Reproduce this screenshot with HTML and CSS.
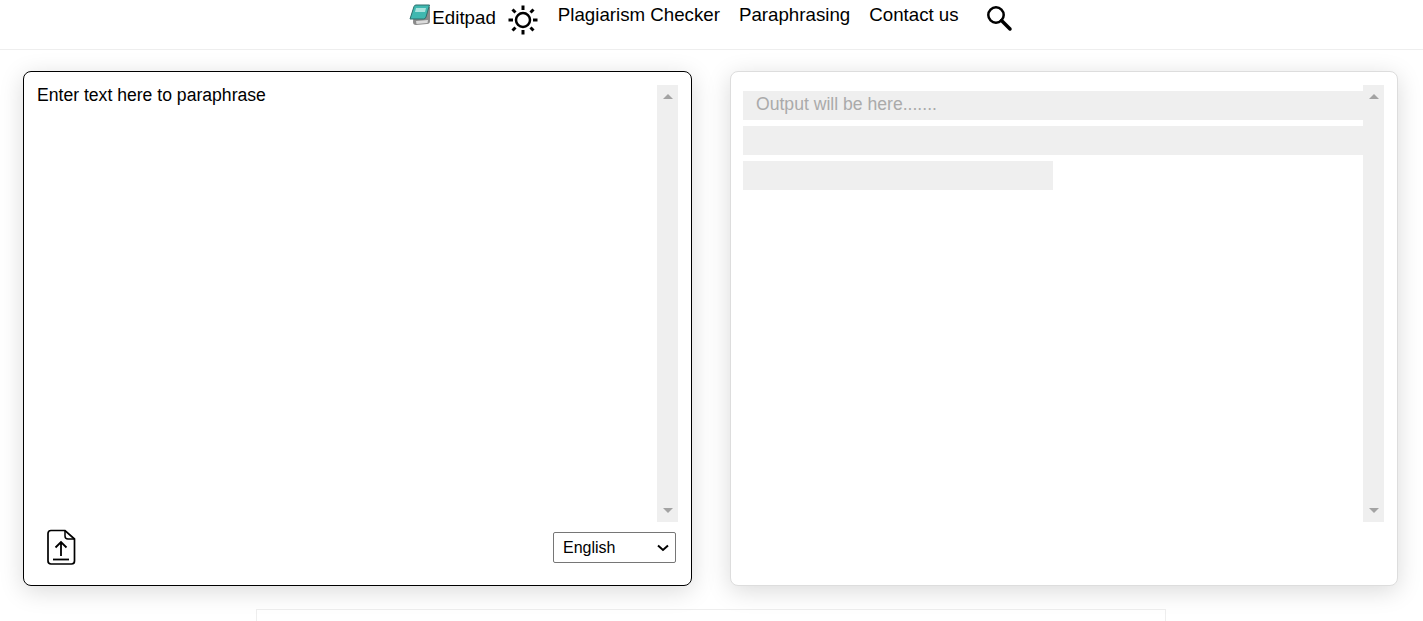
FILE: index.html
```html
<!DOCTYPE html>
<html lang="en">

<head>
    <meta charset="UTF-8">
    <meta name="viewport" content="width=device-width, initial-scale=1.0">
    <title>Editpad Paraphrasing</title>
    <link rel="stylesheet" href="styles.css">
</head>

<body>

    <header class="site-header">
        <a class="brand" href="#">
            <svg class="brand-icon" width="22" height="22" viewBox="0 0 22 22">
                <path d="M5 4 L21 3 L21 17 Q21 20 18 20 L7 21 Q4 21 4 18 Z" fill="#8a8a8a" />
                <path d="M7 17 L19 16 L18.500 19 L7.500 20 Z" fill="#dcdcdc" />
                <path d="M5 2.500 Q5.500 1 7 1 L20.500 1 L17 13 Q16.500 15 14.500 15 L1 15 Z" fill="#3fb8b0"
                    stroke="#2c6f6c" stroke-width="1" />
                <path d="M7 4 L17 4 L16 8 L6 8 Z" fill="#a9e3de" />
            </svg>
            <span>Editpad</span>
        </a>
        <button class="theme-btn" type="button" aria-label="Theme">
            <svg width="32" height="32" viewBox="0 0 32 32">
                <circle cx="16" cy="16" r="7" fill="none" stroke="#000" stroke-width="2.500" />
                <g stroke="#000" stroke-width="3">
                    <path d="M16 1.500 V6" />
                    <path d="M16 26 V30.500" />
                    <path d="M1.500 16 H6" />
                    <path d="M26 16 H30.500" />
                    <path d="M5.500 5.500 L8.500 8.500" />
                    <path d="M23.500 23.500 L26.500 26.500" />
                    <path d="M5.500 26.500 L8.500 23.500" />
                    <path d="M23.500 8.500 L26.500 5.500" />
                </g>
            </svg>
        </button>
        <nav class="main-nav">
            <a href="#">Plagiarism Checker</a>
            <a href="#">Paraphrasing</a>
            <a href="#">Contact us</a>
        </nav>
        <button class="search-btn" type="button" aria-label="Search">
            <svg width="28" height="28" viewBox="0 0 28 28">
                <circle cx="11" cy="11" r="7.700" fill="none" stroke="#000" stroke-width="2.500" />
                <path d="M16.500 16.500 L25 25" stroke="#000" stroke-width="3.500" stroke-linecap="round" />
            </svg>
        </button>
    </header>

    <main class="tool">
        <section class="card card-input">
            <div class="card-body">
                <div class="input-text">Enter text here to paraphrase</div>
                <div class="scroll-track">
                    <span class="arrow-up"></span>
                    <span class="arrow-down"></span>
                </div>
            </div>
            <div class="card-foot">
                <button class="upload-btn" type="button" aria-label="Upload file">
                    <svg width="32" height="38" viewBox="0 0 32 38" fill="none" stroke="#000">
                        <path d="M6 2.500 H20 L29.500 11 V33 Q29.500 36 26.500 36 H6 Q3 36 3 33 V5.500 Q3 2.500 6 2.500 Z"
                            stroke-width="1.700" />
                        <path d="M20 2.500 V8 Q20 11 23 11 H29.500" stroke-width="1.500" />
                        <path d="M16 28 V14 M10.500 19.500 L16 14 L21.500 19.500" stroke-width="1.800" />
                        <path d="M8 31.500 H24" stroke-width="1.800" />
                    </svg>
                </button>
                <select class="lang-select">
                    <option>English</option>
                </select>
            </div>
        </section>

        <section class="card card-output">
            <div class="card-body">
                <div class="output-lines">
                    <div class="line">Output will be here.......</div>
                    <div class="line"></div>
                    <div class="line line-short"></div>
                </div>
                <div class="scroll-track">
                    <span class="arrow-up"></span>
                    <span class="arrow-down"></span>
                </div>
            </div>
        </section>
    </main>

    <div class="below-box"></div>

</body>

</html>
```

FILE: styles.css
```css
html,
body {
    margin: 0;
    height: 100%;
    overflow: hidden;
    background-color: #fff;
    font-family: "Liberation Sans", Arial, sans-serif;
    color: #000;
}

a {
    color: #000;
    text-decoration: none;
}

button {
    background: none;
    border: none;
    padding: 0;
    display: block;
    cursor: pointer;
}

.site-header {
    height: 49px;
    padding-right: 1px;
    border-bottom: 1px solid #eee;
    display: flex;
    justify-content: center;
    align-items: flex-start;
}

.brand {
    display: flex;
    align-items: flex-start;
    font-size: 18.72px;
    line-height: 22px;
    padding-top: 7px;
}

.brand span {
    margin-left: 1px;
}

.brand-icon {
    margin-top: -3px;
}

.theme-btn {
    margin: 4px 0 0 11px;
}

.main-nav {
    display: flex;
    gap: 19px;
    margin-left: 19px;
    padding-top: 4px;
    font-size: 18.72px;
    line-height: 22px;
}

.search-btn {
    margin: 4px 0 0 26px;
}

.tool {
    display: flex;
    gap: 38px;
    padding: 21px 25px 0 23px;
}

.card {
    flex: 1;
    height: 515px;
    box-sizing: border-box;
    background: #fff;
    border-radius: 8px;
    padding: 13px;
    box-shadow: 0 5px 25px rgba(0, 0, 0, 0.15);
}

.card-input {
    border: 1px solid #000;
}

.card-output {
    border: 1px solid #ddd;
    padding-left: 12px;
}

.card-body {
    display: flex;
    height: 437px;
}

.input-text {
    flex: 1;
    font-size: 17.6px;
    line-height: 21px;
}

.output-lines {
    flex: 1;
    padding-top: 6px;
}

.line {
    height: 29px;
    margin-bottom: 6px;
    padding-left: 13px;
    background: #efefef;
    color: #aaa;
    font-size: 17.6px;
    line-height: 27px;
}

.line-short {
    width: 50%;
    padding-left: 0;
}

.scroll-track {
    width: 21px;
    background: #efefef;
    display: flex;
    flex-direction: column;
    justify-content: space-between;
    align-items: center;
    padding: 9px 0;
    box-sizing: border-box;
}

.arrow-up,
.arrow-down {
    width: 0;
    height: 0;
    border-left: 5px solid transparent;
    border-right: 5px solid transparent;
}

.arrow-up {
    border-bottom: 5px solid #a3a3a3;
}

.arrow-down {
    border-top: 5px solid #a3a3a3;
}

.card-foot {
    display: flex;
    justify-content: space-between;
    align-items: flex-start;
    padding-top: 6px;
}

.upload-btn {
    margin-left: 8px;
}

.lang-select {
    appearance: none;
    width: 123px;
    height: 31px;
    margin: 4px 2px 0 0;
    padding-left: 9px;
    font-family: "Liberation Sans", Arial, sans-serif;
    font-size: 16px;
    color: #000;
    background: #fff url("data:image/svg+xml,%3Csvg xmlns='http://www.w3.org/2000/svg' width='12' height='8'%3E%3Cpath d='M1 1.500 L6 6 L11 1.500' fill='none' stroke='%23000' stroke-width='2'/%3E%3C/svg%3E") no-repeat right 6px center;
    border: 1px solid #767676;
    border-radius: 2px;
}

.below-box {
    height: 11px;
    margin: 23px 257px 0 256px;
    border: 1px solid #eee;
    border-bottom: none;
}
```
